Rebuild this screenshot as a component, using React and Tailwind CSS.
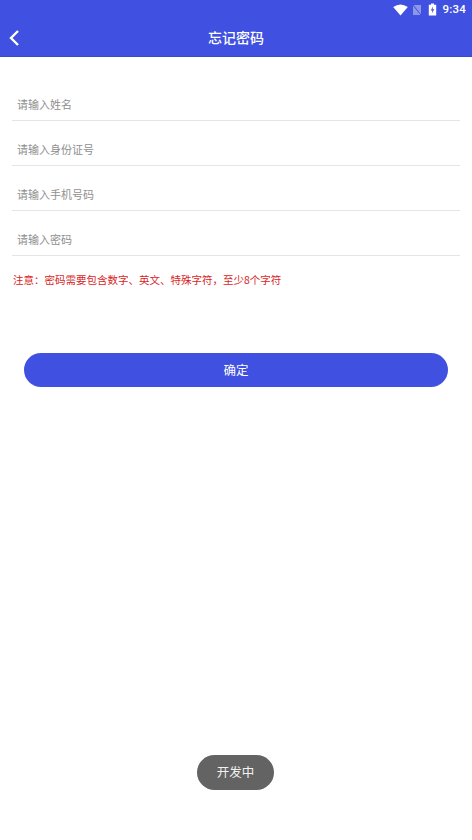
function StatusBar() {
  return (
    <div className="h-[19px] flex items-center justify-end pr-[6px] text-white">
      <svg width="15" height="12" viewBox="0 0 15 12">
        <path d="M0.2 3 Q7.5 -2.2 14.8 3 L7.5 11.6 Z" fill="#fff" />
      </svg>
      <svg width="10" height="12" viewBox="0 0 10 12" className="ml-[4px]">
        <path d="M1 1 H9 V11 H1 Z" fill="#8c97e8" />
        <path d="M1 1 L9 11" stroke="#3f4de0" strokeWidth="1" />
      </svg>
      <svg width="9" height="13" viewBox="0 0 9 13" className="ml-[6px]">
        <path d="M3 0.5 H6 V1.8 H8.2 V12.5 H0.8 V1.8 H3 Z" fill="#fff" />
        <path d="M5 3.2 L2.8 7.4 H4.4 L3.9 10.4 L6.3 6.2 H4.7 Z" fill="#4250e0" />
      </svg>
      <span className="ml-[6px] text-[11.5px] leading-none font-medium font-['Roboto',sans-serif] tracking-[0.2px]">9:34</span>
    </div>
  );
}

function Field({ placeholder }) {
  return (
    <div className="h-[45px] mx-[12px] border-b border-[#e5e5e5] flex items-end pb-[7px] pl-[5px]">
      <span className="text-[11px] leading-[18px] text-[#8f8f8f]">{placeholder}</span>
    </div>
  );
}

export default function App() {
  return (
    <div className="w-[472px] h-[840px] bg-white flex flex-col font-['Noto_Sans_CJK_SC',sans-serif] relative overflow-hidden">
      <header className="h-[57px] bg-[#4050e0] border-b border-[#3a48cc] shrink-0">
        <StatusBar />
        <div className="relative h-[36px] flex items-center justify-center">
          <svg width="12" height="18" viewBox="0 0 12 18" className="absolute left-[8px] top-[10px]">
            <path d="M10 2 L3 9 L10 16" fill="none" stroke="#fff" strokeWidth="2.4" />
          </svg>
          <span className="text-[14px] font-medium text-white leading-none">忘记密码</span>
        </div>
      </header>

      <div className="pt-[19px]">
        <Field placeholder="请输入姓名" />
        <Field placeholder="请输入身份证号" />
        <Field placeholder="请输入手机号码" />
        <Field placeholder="请输入密码" />
      </div>

      <p className="mt-[15px] ml-[13px] text-[10.5px] leading-[18px] text-[#d81e1e]">
        注意：密码需要包含数字、英文、特殊字符，至少8个字符
      </p>

      <button className="mt-[64px] mx-[24px] h-[34px] rounded-full bg-[#4050e0] text-white text-[12.5px] flex items-center justify-center">
        确定
      </button>

      <div className="absolute left-[197px] top-[755px] w-[77px] h-[35px] rounded-full bg-[#636363] text-[#f2f2f2] text-[12.5px] flex items-center justify-center">
        开发中
      </div>
    </div>
  );
}
